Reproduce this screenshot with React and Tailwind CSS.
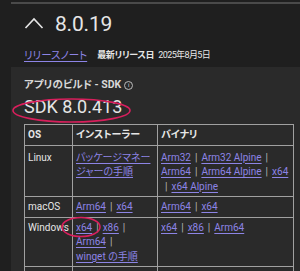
import React from "react";

function L({ children }) {
  return <a className="text-[#8d84e6] underline underline-offset-[2px] decoration-[1px]">{children}</a>;
}
function Sep() {
  return <span className="mx-[4px] text-[#b8b8b8]">|</span>;
}

const cell = "border border-[#a0a0a0] px-[3px]";

export default function App() {
  return (
    <div className="w-[300px] h-[271px] bg-[#1f1f1f] overflow-hidden font-['Roboto','Noto_Sans_CJK_JP',sans-serif] [font-feature-settings:'palt'] text-[#e6e6e6]">
      <div className="ml-[11px] mt-[2px] h-[2px] bg-[#4a4a4a]" />
      <div className="h-[40px] flex items-center pl-[24px]">
        <svg width="20" height="14" viewBox="0 0 20 14" className="mr-[11px] -mt-[3px]">
          <polyline points="1.5,12 10,3 18.5,12" fill="none" stroke="#e6e6e6" strokeWidth="1.6" />
        </svg>
        <span className="text-[21px] leading-none tracking-[-0.2px]">8.0.19</span>
      </div>
      <div className="h-[23px] flex items-center pl-[24px] text-[10.5px]">
        <L>リリースノート</L>
        <span className="ml-[10px] text-[9px] font-bold tracking-[-0.3px]">最新リリース日</span>
        <span className="ml-[4px] text-[9px] tracking-[-0.6px]">2025年8月5日</span>
      </div>
      <div className="relative ml-[11px] bg-[#2a2a2a] h-[300px] pl-[13px] pt-[9px]">
        <div className="h-[18px] flex items-center text-[10.5px] font-bold text-[#d8d8d8]">
          アプリのビルド - SDK
          <span className="ml-[3px] inline-flex items-center justify-center w-[9px] h-[9px] rounded-full border border-[#bbb] text-[6px] font-normal leading-none">i</span>
        </div>
        <div className="h-[26px] flex items-center text-[18px] leading-none">SDK 8.0.413</div>
        <table className="mt-[4px] border-collapse text-[10px] leading-[14.5px] w-[269px] table-fixed">
          <colgroup>
            <col className="w-[48px]" />
            <col className="w-[85px]" />
            <col className="w-[136px]" />
          </colgroup>
          <thead>
            <tr className="font-bold">
              <td className={`${cell} pt-[3px] pb-[2px]`}>OS</td>
              <td className={`${cell} pt-[3px] pb-[2px]`}>インストーラー</td>
              <td className={`${cell} pt-[3px] pb-[2px]`}>バイナリ</td>
            </tr>
          </thead>
          <tbody className="align-top">
            <tr>
              <td className={`${cell} pt-[5px] pb-[2px]`}>Linux</td>
              <td className={`${cell} pt-[5px] pb-[2px] whitespace-nowrap`}>
                <L>パッケージマネー</L><br /><L>ジャーの手順</L>
              </td>
              <td className={`${cell} pt-[5px] pb-[2px] whitespace-nowrap`}>
                <L>Arm32</L><Sep /><L>Arm32 Alpine</L><Sep /><br />
                <L>Arm64</L><Sep /><L>Arm64 Alpine</L><Sep /><L>x64</L><br />
                <Sep /><L>x64 Alpine</L>
              </td>
            </tr>
            <tr>
              <td className={`${cell} pt-[3px] pb-[2px]`}>macOS</td>
              <td className={`${cell} pt-[3px] pb-[2px] whitespace-nowrap`}><L>Arm64</L><Sep /><L>x64</L></td>
              <td className={`${cell} pt-[3px] pb-[2px] whitespace-nowrap`}><L>Arm64</L><Sep /><L>x64</L></td>
            </tr>
            <tr>
              <td className={`${cell} pt-[3px] pb-[2px]`}>Windows</td>
              <td className={`${cell} pt-[3px] pb-[2px] whitespace-nowrap`}>
                <L>x64</L><Sep /><L>x86</L><Sep /><br />
                <L>Arm64</L><Sep /><br />
                <L>winget の手順</L>
              </td>
              <td className={`${cell} pt-[3px] pb-[2px] whitespace-nowrap`}>
                <L>x64</L><Sep /><L>x86</L><Sep /><L>Arm64</L>
              </td>
            </tr>
            <tr>
              <td className={`${cell} h-[20px]`}></td>
              <td className={cell}></td>
              <td className={cell}></td>
            </tr>
          </tbody>
        </table>
        <svg className="absolute left-0 top-0 pointer-events-none" width="289" height="204" viewBox="0 0 289 204">
          <ellipse cx="60.5" cy="43.5" rx="58.5" ry="11.5" fill="none" stroke="#d81f5c" strokeWidth="1.6" />
          <ellipse cx="70" cy="160" rx="19" ry="9.5" fill="none" stroke="#d81f5c" strokeWidth="1.6" />
        </svg>
      </div>
    </div>
  );
}
